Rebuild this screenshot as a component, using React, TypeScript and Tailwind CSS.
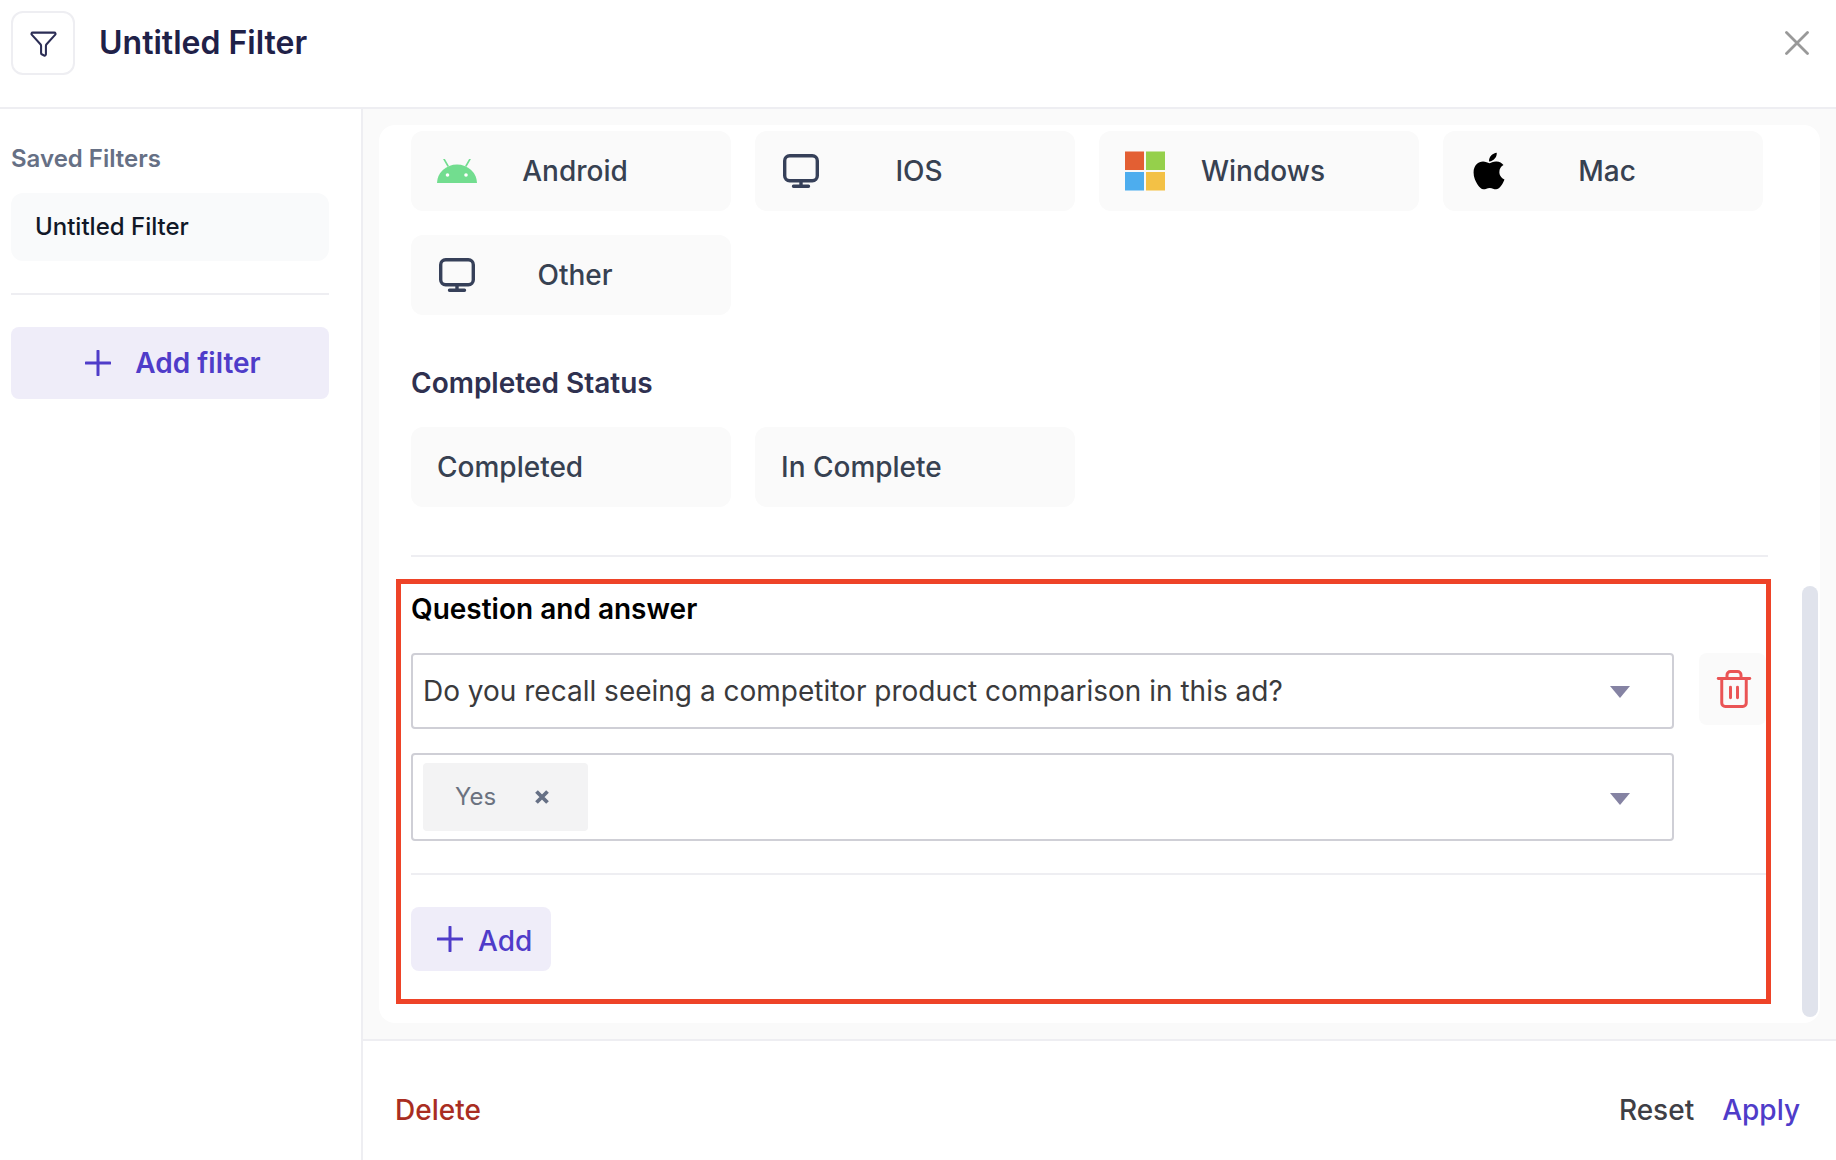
import type { ReactNode } from 'react'
import { Funnel, Trash2 } from 'lucide-react'
import { FaApple } from 'react-icons/fa'

function PlusIcon() {
  return (
    <svg viewBox="0 0 26 26" className="h-[26px] w-[26px] shrink-0" fill="none" stroke="currentColor" strokeWidth="3" strokeLinecap="round">
      <path d="M13 1v24M1 13h24" />
    </svg>
  )
}

function AndroidIcon() {
  return (
    <svg viewBox="0 0 40 24" className="h-[24px] w-[40px]">
      <path d="M7 0l4 7M33 0l-4 7" stroke="#72dd8f" strokeWidth="1.6" strokeLinecap="round" />
      <path d="M0 24A20 18.500 0 0 1 40 24Z" fill="#72dd8f" />
      <circle cx="10.500" cy="16" r="1.800" fill="#fff" />
      <circle cx="29" cy="16" r="1.800" fill="#fff" />
    </svg>
  )
}

function MonitorIcon() {
  return (
    <svg viewBox="0 0 36 34" className="ml-[2px] h-[34px] w-[36px]" fill="none" stroke="#364059" strokeWidth="3.400" strokeLinecap="round" strokeLinejoin="round">
      <rect x="1.700" y="1.700" width="32.600" height="25" rx="5" />
      <path d="M18 27v5M10.500 32.300h15" />
    </svg>
  )
}

function WindowsIcon() {
  return (
    <svg viewBox="0 0 41 40" className="h-[40px] w-[41px]">
      <rect width="19.500" height="19" fill="#e35f33" />
      <rect x="21.500" width="19.500" height="19" fill="#95d04b" />
      <rect y="21" width="19.500" height="19" fill="#4dadee" />
      <rect x="21.500" y="21" width="19.500" height="19" fill="#f3c145" />
    </svg>
  )
}

function Chip({ icon, label }: { icon?: ReactNode; label: string }) {
  return (
    <div className="flex h-[80px] w-[320px] items-center rounded-[12px] bg-[#fafafa] pl-[26px] pr-[58px] text-[28px] font-medium text-[#374151]">
      {icon ? (
        <>
          <div className="flex w-[40px] shrink-0 items-center">{icon}</div>
          <div className="flex-1 text-center">{label}</div>
        </>
      ) : (
        label
      )}
    </div>
  )
}

function Arrow({ className }: { className?: string }) {
  return (
    <svg viewBox="0 0 20 12" className={`h-[12px] w-[20px] shrink-0 ${className ?? ''}`}>
      <path d="M0 0h20L10 12Z" fill="#8583a3" />
    </svg>
  )
}

export default function App() {
  return (
    <div className="flex h-screen flex-col overflow-hidden bg-white font-['Inter',sans-serif]">
      {/* Header */}
      <div className="flex h-[109px] shrink-0 items-start border-b-2 border-[#eeeef2] pl-[11px] pr-[27px] pt-[11px]">
        <div className="flex h-[64px] w-[64px] items-center justify-center rounded-[12px] border-2 border-[#eeeef2] text-[#2b2d55]">
          <Funnel size={29} strokeWidth={1.7} />
        </div>
        <h1 className="ml-[24px] flex-1 text-[32px] font-semibold leading-[64px] text-[#1f2148]">Untitled Filter</h1>
        <svg viewBox="0 0 24 24" className="mt-[20px] h-[24px] w-[24px]" fill="none" stroke="#999999" strokeWidth="2.800" strokeLinecap="round">
          <path d="M1.500 1.500l21 21M22.500 1.500l-21 21" />
        </svg>
      </div>

      <div className="flex min-h-0 flex-1">
        {/* Sidebar */}
        <aside className="w-[363px] shrink-0 border-r-2 border-[#eeeef2] pl-[11px] pr-[32px] pt-[34px]">
          <p className="text-[24px] font-semibold leading-[32px] text-[#667085]">Saved Filters</p>
          <div className="mt-[18px] flex h-[68px] items-center rounded-[12px] bg-[#f9fafb] pl-[24px] text-[24px] font-medium text-[#111827]">
            Untitled Filter
          </div>
          <div className="mt-[32px] h-[2px] bg-[#eeeef2]" />
          <button className="mt-[32px] flex h-[72px] w-full items-center justify-center gap-[24px] rounded-[8px] bg-[#efedf9] pl-[6px] text-[28px] font-semibold text-[#4f3cc9]">
            <PlusIcon />
            Add filter
          </button>
        </aside>

        <div className="flex min-w-0 flex-1 flex-col">
          <main className="min-h-0 flex-1 bg-[#fafafa] p-[16px]">
            <div className="relative h-full overflow-hidden rounded-[16px] bg-white pl-[32px] pt-[6px]">
              <div className="flex w-[1358px] flex-wrap gap-[24px]">
                <Chip icon={<AndroidIcon />} label="Android" />
                <Chip icon={<MonitorIcon />} label="IOS" />
                <Chip icon={<WindowsIcon />} label="Windows" />
                <Chip icon={<FaApple className="h-[42px] w-[40px] text-black" />} label="Mac" />
                <Chip icon={<MonitorIcon />} label="Other" />
              </div>

              <h2 className="mt-[51px] text-[28px] font-semibold leading-[34px] text-[#2f3150]">Completed Status</h2>
              <div className="mt-[27px] flex gap-[24px]">
                <Chip label="Completed" />
                <Chip label="In Complete" />
              </div>

              <div className="mt-[48px] h-[2px] w-[1357px] bg-[#eeeef2]" />

              {/* Question and answer */}
              <section className="-ml-[15px] mt-[22px] w-[1375px] border-[5px] border-[#ee4328] pb-[28px] pl-[10px] pt-[8px]">
                <h2 className="text-[28px] font-semibold leading-[34px] text-black">Question and answer</h2>
                <div className="mt-[27px] flex items-start gap-[25px]">
                  <div className="flex h-[76px] w-[1263px] items-center justify-between rounded-[4px] border-2 border-[#cfcfd6] pl-[10px] pr-[42px] text-[28px] text-[#3a3a3c]">
                    Do you recall seeing a competitor product comparison in this ad?
                    <Arrow className="mt-[2px]" />
                  </div>
                  <div className="flex h-[72px] flex-1 items-center justify-center rounded-[8px] bg-[#fafafa] pl-[3px] text-[#ea5455]">
                    <Trash2 size={42} strokeWidth={1.7} />
                  </div>
                </div>
                <div className="mt-[24px] flex h-[88px] w-[1263px] items-center justify-between rounded-[4px] border-2 border-[#cfcfd6] pl-[10px] pr-[42px]">
                  <div className="flex h-[68px] w-[165px] items-center rounded-[4px] bg-[#f3f3f4] pl-[32px] text-[24px] text-[#6b7280]">
                    Yes
                    <svg viewBox="0 0 14 14" className="ml-[39px] h-[14px] w-[14px]" fill="none" stroke="#667085" strokeWidth="3.800">
                      <path d="M1.500 1.500l11 11M12.500 1.500l-11 11" />
                    </svg>
                  </div>
                  <Arrow className="mt-[3px]" />
                </div>
                <div className="mt-[32px] h-[2px] bg-[#eeeef2]" />
                <button className="mt-[32px] flex h-[64px] w-[140px] items-center gap-[15px] rounded-[8px] bg-[#efedf9] pl-[26px] text-[28px] font-medium text-[#4f3cc9]">
                  <PlusIcon />
                  <span className="mt-[4px]">Add</span>
                </button>
              </section>

              <div className="absolute right-[2px] top-[461px] h-[431px] w-[16px] rounded-full bg-[#e0e3ec]" />
            </div>
          </main>

          {/* Footer */}
          <footer className="flex h-[121px] shrink-0 items-center justify-between border-t-2 border-[#eeeef2] pl-[32px] pr-[36px] pt-[18px] text-[28px] font-medium">
            <button className="text-[#a92d22]">Delete</button>
            <div className="flex gap-[28px]">
              <button className="text-[#3f3f46]">Reset</button>
              <button className="text-[#4f3cc9]">Apply</button>
            </div>
          </footer>
        </div>
      </div>
    </div>
  )
}
